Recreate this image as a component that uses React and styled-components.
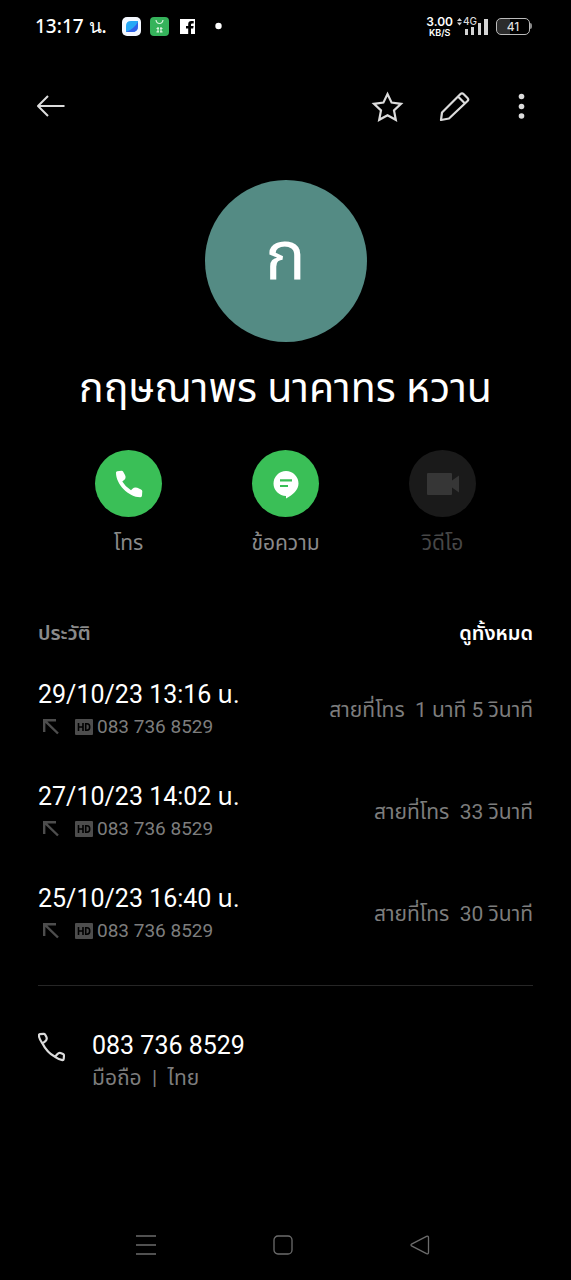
import React from 'react';
import styled, { createGlobalStyle } from 'styled-components';

const GlobalStyle = createGlobalStyle`
  * {
    box-sizing: border-box;
  }

  body {
    margin: 0;
    background-color: #000;
    color: #fff;
    font-family: Roboto, 'Noto Sans Thai', 'Noto Sans', sans-serif;
  }

  svg {
    display: block;
    flex-shrink: 0;
  }
`;

const Screen = styled.div`
  display: flex;
  flex-direction: column;
  min-height: 100vh;
`;

const StatusBar = styled.div`
  display: flex;
  justify-content: space-between;
  align-items: center;
  height: 52px;
  padding: 0 39px 0 35px;
`;

const StatusGroup = styled.div`
  display: flex;
  align-items: center;
  gap: ${(props) => props.$gap};
`;

const Clock = styled.time`
  margin-right: 6px;
  font-family: 'Noto Sans', sans-serif;
  font-size: 19px;
  font-weight: 500;
  line-height: 24px;
`;

const Speed = styled.div`
  display: flex;
  flex-direction: column;
  align-items: center;
  font-family: Inter, sans-serif;
  font-size: 9px;
  font-weight: 600;
  line-height: 9px;
`;

const SpeedValue = styled.span`
  font-size: 12px;
  line-height: 12px;
`;

const Signal = styled.div`
  position: relative;
  margin-right: 4px;
`;

const Network = styled.span`
  position: absolute;
  top: 0;
  left: 6px;
  color: #dcdcdc;
  font-family: Inter, sans-serif;
  font-size: 10px;
  font-weight: 500;
  line-height: 9px;
`;

const Battery = styled.div`
  display: flex;
  align-items: center;
`;

const BatteryBody = styled.div`
  width: 34px;
  height: 17px;
  border: 1px solid #bbb;
  border-radius: 5px;
  background: linear-gradient(to right, #2c2c2c 41%, #000 41%);
  color: #dcdcdc;
  font-family: Inter, sans-serif;
  font-size: 12px;
  font-weight: 500;
  line-height: 15px;
  text-align: center;
`;

const BatteryTip = styled.div`
  width: 2px;
  height: 6px;
  background-color: #888;
  border-radius: 0 2px 2px 0;
`;

const Toolbar = styled.header`
  display: flex;
  justify-content: space-between;
  align-items: center;
  height: 108px;
  padding: 0 33px 0 34px;
`;

const ToolGroup = styled.div`
  display: flex;
  gap: 34px;
`;

const IconButton = styled.button`
  display: flex;
  justify-content: center;
  align-items: center;
  width: 33px;
  height: 33px;
  padding: 0;
  border: 0;
  background: none;
  color: #dcdcdc;
  cursor: pointer;
`;

const Profile = styled.section`
  display: flex;
  flex-direction: column;
  align-items: center;
  padding-top: 20px;
`;

const Avatar = styled.div`
  width: 162px;
  height: 162px;
  border-radius: 50%;
  background-color: #548b84;
  font-size: 68px;
  line-height: 152px;
  text-align: center;
`;

const Name = styled.h1`
  margin: 18px 0 34px;
  font-size: 41px;
  font-weight: 400;
  line-height: 56px;
  text-align: center;
`;

const Actions = styled.div`
  display: grid;
  grid-template-columns: repeat(3, 1fr);
  padding: 0 50px;
`;

const Action = styled.button`
  display: flex;
  flex-direction: column;
  align-items: center;
  gap: 12px;
  padding: 0;
  border: 0;
  background: none;
  color: ${(props) => (props.disabled ? '#474747' : '#8a8a8a')};
  font-family: inherit;
  font-size: 21px;
  line-height: 28px;
  cursor: pointer;
`;

const ActionCircle = styled.span`
  display: flex;
  justify-content: center;
  align-items: center;
  width: 67px;
  height: 67px;
  border-radius: 50%;
  background-color: ${(props) => (props.$off ? '#1a1a1a' : '#3abf57')};
  color: ${(props) => (props.$off ? '#363636' : '#fff')};
`;

const History = styled.section`
  display: flex;
  flex-direction: column;
  margin: 62px 38px 0;
  padding-bottom: 38px;
  border-bottom: 1px solid #262626;
`;

const HistoryHeader = styled.div`
  display: flex;
  justify-content: space-between;
  margin-bottom: 32px;
  line-height: 28px;
`;

const HistoryTitle = styled.h2`
  margin: 0;
  color: #8a8a8a;
  font-size: 20px;
  font-weight: 600;
`;

const SeeAll = styled.a`
  color: #fff;
  font-size: 20px;
  font-weight: 600;
  text-decoration: none;
`;

const CallList = styled.ul`
  display: flex;
  flex-direction: column;
  gap: 38px;
  margin: 0;
  padding: 0;
  list-style: none;
`;

const CallRow = styled.li`
  display: flex;
  justify-content: space-between;
  align-items: center;
`;

const Primary = styled.div`
  font-size: 25px;
  line-height: 32px;
`;

const Secondary = styled.div`
  display: flex;
  align-items: center;
  color: #7d7d7d;
  font-size: ${(props) => (props.$thai ? '21px' : '19px')};
  line-height: 32px;
  white-space: pre;
`;

const Duration = styled(Secondary)`
  padding-bottom: 3px;
`;

const HdIcon = styled.svg`
  margin: 0 4px 0 15px;
`;

const Contact = styled.a`
  display: flex;
  gap: 27px;
  margin: 44px 38px 0;
  color: #fff;
  text-decoration: none;
`;

const NavBar = styled.nav`
  display: grid;
  grid-template-columns: repeat(3, 137px);
  justify-content: center;
  align-items: center;
  justify-items: center;
  height: 70px;
  margin-top: auto;
  padding-right: 5px;
`;

const NavButton = styled(IconButton)`
  color: #6c6c6c;
`;

const phone = '083 736 8529';

const calls = [
  { date: '29/10/23 13:16 น.', duration: '1 นาที 5 วินาที' },
  { date: '27/10/23 14:02 น.', duration: '33 วินาที' },
  { date: '25/10/23 16:40 น.', duration: '30 วินาที' },
];

const Call = ({ date, duration }) => (
  <CallRow>
    <div>
      <Primary>{date}</Primary>
      <Secondary>
        <svg width='22' height='18' viewBox='0 0 22 18' fill='none' stroke='#4d4d4d' strokeWidth='2.400'>
          <path d='M6.200 14V2.200H18M6.200 2.200L20 15.500' />
        </svg>
        <HdIcon width='18' height='16' viewBox='0 0 18 16'>
          <rect width='18' height='16' rx='1' fill='#4d4d4d' />
          <path d='M3.500 4V12M8 4V12M3.500 8H8M10.700 4.800V11.200H12Q14.700 11.200 14.700 8Q14.700 4.800 12 4.800Z' fill='none' stroke='#000' strokeWidth='1.600' />
        </HdIcon>
        {phone}
      </Secondary>
    </div>
    <Duration $thai>{`สายที่โทร  ${duration}`}</Duration>
  </CallRow>
);

export default function App() {
  return (
    <Screen>
      <GlobalStyle />
      <StatusBar>
        <StatusGroup $gap='9px'>
          <Clock>13:17 น.</Clock>
          <svg width='19' height='19' viewBox='0 0 19 19'>
            <rect width='19' height='19' rx='5' fill='#f4f8ff' />
            <path d='M4 15V9Q4 4 9 4H16V9Q16 15 10 15Z' fill='#27a8f5' />
            <path d='M4 15Q12 12 16 5V9Q16 15 10 15Z' fill='#315fe8' />
          </svg>
          <svg width='19' height='19' viewBox='0 0 19 19'>
            <rect width='19' height='19' rx='4' fill='#35b35b' />
            <path d='M6 3Q6.500 6.500 9.500 6.500T13 3' fill='none' stroke='#d9f5df' strokeWidth='1.200' />
            <path d='M8 10V15.500M11 10V15.500M6.500 11.500H9M10 11.500H12.500M6.500 14.800H9M10 14.800H12.500' stroke='#d9f5df' strokeWidth='1.200' />
          </svg>
          <svg width='19' height='19' viewBox='0 0 19 19'>
            <path d='M2 2H17V17H13V11.500H15.200L15.600 9H13V7.600Q13 6.400 14.200 6.400H15.700V4H13.400Q10.200 4 10.200 7.200V9H8V11.500H10.200V17H2Z' fill='#fff' />
          </svg>
          <svg width='28' height='8' viewBox='0 0 28 8'>
            <circle cx='12.500' cy='4' r='3.200' fill='#fff' />
          </svg>
        </StatusGroup>
        <StatusGroup $gap='4px'>
          <Speed>
            <SpeedValue>3.00</SpeedValue>
            KB/S
          </Speed>
          <Signal>
            <svg width='31' height='18' viewBox='0 0 31 18' fill='#d4d4d4'>
              <path d='M0 4L2.500 1L5 4ZM0 5.500H5L2.500 8.500Z' />
              <path d='M8 12h3v6h-3zM14 10h3v8h-3zM21 6h3v12h-3zM27 2h4v16h-4z' />
            </svg>
            <Network>4G</Network>
          </Signal>
          <Battery>
            <BatteryBody>41</BatteryBody>
            <BatteryTip />
          </Battery>
        </StatusGroup>
      </StatusBar>
      <Toolbar>
        <IconButton aria-label='กลับ'>
          <svg width='30' height='24' viewBox='0 0 30 24' fill='none' stroke='currentColor' strokeWidth='2'>
            <path d='M28.500 12H2M12 2L2 12L12 22' strokeLinejoin='round' />
          </svg>
        </IconButton>
        <ToolGroup>
          <IconButton aria-label='รายการโปรด'>
            <svg width='33' height='33' viewBox='0 0 33 33' fill='none' stroke='currentColor' strokeWidth='2.200'>
              <path d='M16.500 4L20.600 12.600L30 13.800L23 20.400L24.800 29.800L16.500 25.200L8.200 29.800L10 20.400L3 13.800L12.400 12.600Z' />
            </svg>
          </IconButton>
          <IconButton aria-label='แก้ไข'>
            <svg width='33' height='33' viewBox='0 0 33 33' fill='none' stroke='currentColor' strokeWidth='2.200' strokeLinejoin='round'>
              <path d='M3 30L4 22.500L22.500 4Q24 2.500 25.500 4L29.500 8Q31 9.500 29.500 11L11 28.500ZM20 6.500L27 13.500' />
            </svg>
          </IconButton>
          <IconButton aria-label='เพิ่มเติม'>
            <svg width='33' height='33' viewBox='0 0 33 33' fill='currentColor'>
              <circle cx='16.500' cy='6.500' r='2.800' />
              <circle cx='16.500' cy='16.500' r='2.800' />
              <circle cx='16.500' cy='26' r='2.800' />
            </svg>
          </IconButton>
        </ToolGroup>
      </Toolbar>
      <Profile>
        <Avatar>ก</Avatar>
        <Name>กฤษณาพร นาคาทร หวาน</Name>
      </Profile>
      <Actions>
        <Action>
          <ActionCircle>
            <svg width='28' height='28' viewBox='0 0 28 28' fill='currentColor'>
              <path d='M1 2.500Q1 1.400 2.200 1.200L6.500 0.800Q7.600 0.700 8.200 1.700L10 5Q11.600 8.200 8.800 10.300L7.300 11.500Q10.500 17 16 20.300L17.500 18.700Q19.500 16.800 22.300 17.800L26 19.400Q27.300 20 27.300 21.300L27 25.500Q26.900 27 25.500 27.200C14 27.500 0.800 14.500 1 2.500Z' />
            </svg>
          </ActionCircle>
          โทร
        </Action>
        <Action>
          <ActionCircle>
            <svg width='28' height='30' viewBox='0 0 28 30'>
              <path d='M14 2A12.500 12.500 0 0 1 26.500 14.500C26.500 21 21 25.500 14 29.500V27A12.500 12.500 0 0 1 14 2Z' fill='currentColor' />
              <path d='M8 11.300H20M8 17H16' stroke='#3abf57' strokeWidth='2.200' />
            </svg>
          </ActionCircle>
          ข้อความ
        </Action>
        <Action disabled>
          <ActionCircle $off>
            <svg width='34' height='24' viewBox='0 0 34 24' fill='currentColor'>
              <path d='M1 2Q1 1 2 1H25Q26 1 26 2V8.500L33 3.500V20.500L26 15.500V22Q26 23 25 23H2Q1 23 1 22Z' />
            </svg>
          </ActionCircle>
          วิดีโอ
        </Action>
      </Actions>
      <History>
        <HistoryHeader>
          <HistoryTitle>ประวัติ</HistoryTitle>
          <SeeAll href='#'>ดูทั้งหมด</SeeAll>
        </HistoryHeader>
        <CallList>
          {calls.map((call) => (
            <Call key={call.date} {...call} />
          ))}
        </CallList>
      </History>
      <Contact href='tel:0837368529'>
        <svg width='27' height='32' viewBox='0 0 27 32' fill='none' stroke='#dcdcdc' strokeWidth='2.200' strokeLinejoin='round'>
          <path d='M4.500 13.500Q1 8.500 0.900 5.500Q0.800 4.400 2 4.200L5.500 3.800Q6.600 3.700 7.200 4.700L8.300 6.800Q9.500 9.300 7.400 11.200ZM4.500 13.500Q9 22.500 17 26.800M17 26.800L19.300 24.200Q21 22.300 23.200 23.200L25 24Q26 24.500 26 25.500L25.700 29Q25.600 30.200 24.500 30.200Q21 29.500 17 26.800Z' />
        </svg>
        <div>
          <Primary>{phone}</Primary>
          <Secondary $thai>{'มือถือ  |  ไทย'}</Secondary>
        </div>
      </Contact>
      <NavBar>
        <NavButton aria-label='เมนู'>
          <svg width='20' height='20' viewBox='0 0 20 20' stroke='currentColor' strokeWidth='1.300'>
            <path d='M0 1H20M0 10H20M0 19H20' />
          </svg>
        </NavButton>
        <NavButton aria-label='หน้าแรก'>
          <svg width='20' height='20' viewBox='0 0 20 20' fill='none' stroke='currentColor' strokeWidth='1.300'>
            <rect x='1' y='1' width='18' height='18' rx='4' />
          </svg>
        </NavButton>
        <NavButton aria-label='ย้อนกลับ'>
          <svg width='20' height='20' viewBox='0 0 20 20' fill='none' stroke='currentColor' strokeWidth='1.300'>
            <path d='M2 8.800L16.500 1.300Q18.500 0.700 18.500 2.700V17.300Q18.500 19.300 16.500 18.700L2 11.200Q0 10 2 8.800Z' />
          </svg>
        </NavButton>
      </NavBar>
    </Screen>
  );
}
